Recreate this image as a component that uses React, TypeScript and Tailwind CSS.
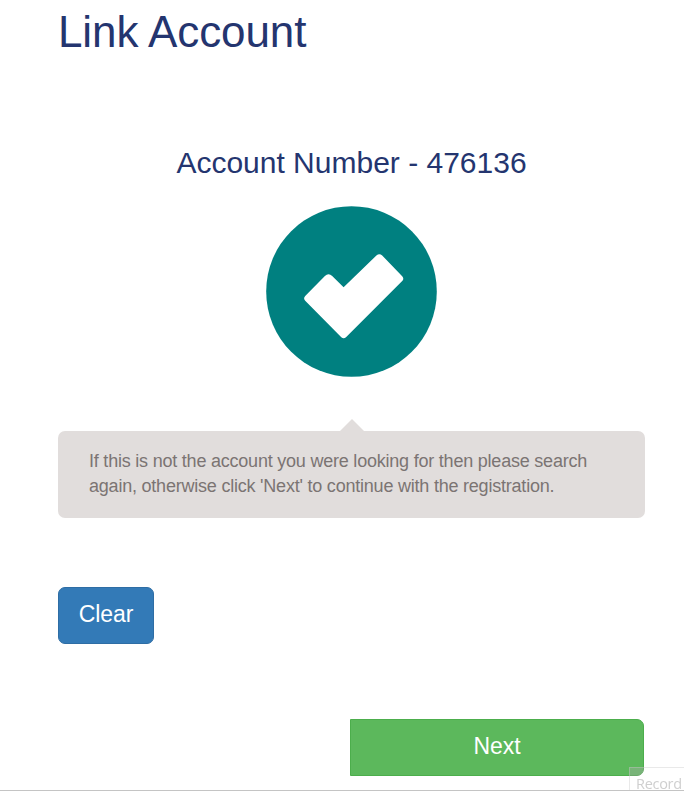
function AccountFoundIcon() {
  return (
    <svg width="171" height="171" viewBox="0 0 171 171" className="block" aria-hidden="true">
      <circle cx="85.5" cy="85.5" r="85.3" fill="#008080" />
      <path
        d="M39.2 89.9 Q37 92.2 39.2 94.7 L75.3 131.2 Q77.6 133.2 80 131.2 L136.2 75 Q138.4 72.6 136.2 70.3 L116.2 49.6 Q113.4 47 110.4 49.6 L77.6 81.3 L66.2 70 Q62.5 66.6 58.9 70 Z"
        fill="#fff"
      />
    </svg>
  );
}

export default function App() {
  return (
    <div className="relative h-[791px] w-[684px] overflow-hidden border-b border-[#c4c4c4] bg-white font-['Liberation_Sans',Arial,sans-serif]">
      <main className="flex flex-col pl-[58px] pr-[39px]">
        <h1 className="h-[64px] pt-[7px] text-[44px] leading-[50px] tracking-[-0.1px] whitespace-nowrap text-[#24356f]">
          Link Account
        </h1>

        <h2 className="mt-[82px] text-center text-[30px] leading-[34px] whitespace-nowrap text-[#24356f]">
          Account Number - 476136
        </h2>

        <div className="mt-[26px] flex justify-center">
          <AccountFoundIcon />
        </div>

        {/* Callout with pointer */}
        <svg width="26" height="12" viewBox="0 0 26 12" className="mt-[42px] self-center" aria-hidden="true">
          <path d="M1 12 L13 0 L25 12 Z" fill="#e1dddc" />
        </svg>
        <div className="h-[87px] rounded-[7px] bg-[#e1dddc] px-[31px] pt-[18px] text-[18px] leading-[25px] tracking-[-0.216px] text-[#7b7473]">
          <p className="whitespace-nowrap">If this is not the account you were looking for then please search</p>
          <p className="whitespace-nowrap">again, otherwise click 'Next' to continue with the registration.</p>
        </div>

        <button
          type="button"
          className="mt-[69px] h-[57px] w-[96px] rounded-[7px] border border-[#2e6da4] bg-[#337ab7] pb-[3px] text-[23px] tracking-[-0.1px] text-white"
        >
          Clear
        </button>

        <button
          type="button"
          className="mt-[75px] mr-px h-[57px] w-[294px] self-end rounded-r-[7px] border border-[#4cae4c] bg-[#5cb85c] pb-[3px] text-[23px] tracking-[-0.1px] text-white"
        >
          Next
        </button>
      </main>

      {/* Faded recorder label over the page corner */}
      <div className="absolute top-[767px] left-[629px] h-[24px] w-[56px] border-t border-l border-[#c8c8c8]/40 bg-white/5 pt-[9px] pl-[6px] font-['Open_Sans',sans-serif] text-[14.5px] leading-[14px] tracking-[-0.3px] text-[#cfcfcf] backdrop-saturate-[.68]">
        Record
      </div>
    </div>
  );
}
